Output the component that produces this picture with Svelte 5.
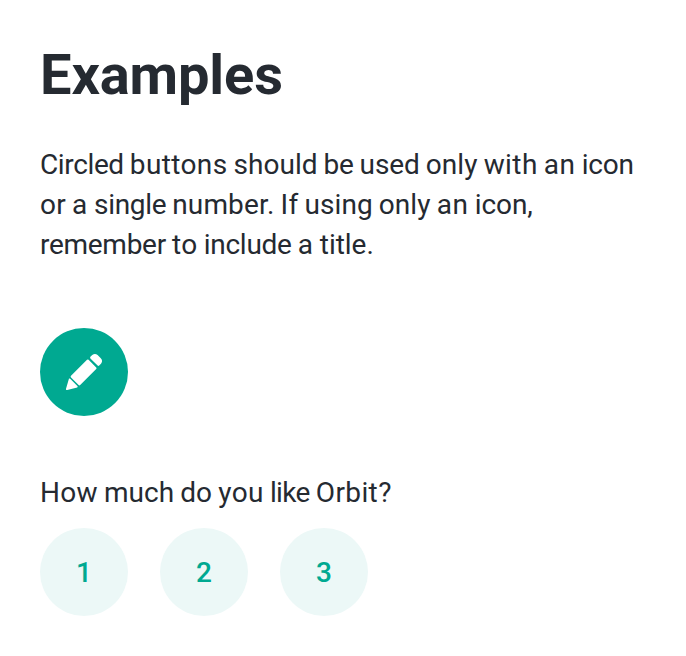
<script>
  const ratings = [1, 2, 3];

  // Each word carries its own tracking in pixels.
  const intro = [
    ['Circled', -0.37], ['buttons', 0.38], ['should', 0.02], ['be', -0.28], ['used', -0.13],
    ['only', 0.13], ['with', 0.4], ['an', 0.66], ['icon', -0.22], ['or', 0.28], ['a', 0.77],
    ['single', -0.34], ['number.', 0.17], ['If', 0.33], ['using', 0.03], ['only', 0.13],
    ['an', 0.66], ['icon,', -0.08], ['remember', -0.28], ['to', 0.44], ['include', -0.25],
    ['a', 0.77], ['title.', -0.02]
  ];
  const question = [
    ['How', 0.34], ['much', 0], ['do', 0.12], ['you', 0.45], ['like', -0.66], ['Orbit?', 0.4]
  ];
</script>

{#snippet tracked(words)}
  {#each words as [word, spacing]}<span style="letter-spacing: {spacing}px">{word}</span>{' '}{/each}
{/snippet}

<main>
  <h1>Examples</h1>
  <p class="intro">{@render tracked(intro)}</p>
  <button class="circle primary" title="Edit" aria-label="Edit">
    <svg viewBox="0 0 24 24" width="48" height="48" aria-hidden="true">
      <path fill="currentColor" d="M4.5 15.3 Q4.8 15.1 5.1 15.4 L8.7 19 Q9.1 19.5 8.6 19.7 L3.6 21 Q2.8 21.2 3 20.4 Z M5.5 14.7 Q5.1 14.3 5.5 13.9 L13.5 5.9 Q13.9 5.5 14.3 5.9 L18.1 9.7 Q18.5 10.1 18.1 10.5 L10.1 18.5 Q9.7 18.9 9.3 18.5 Z M15.2 5.2 Q14.9 4.8 15.2 4.4 L16.1 3.5 Q17.5 2.4 18.8 3.5 L20.4 5.1 Q21.6 6.4 20.5 7.9 L19.6 8.8 Q19.2 9.2 18.8 8.8 Z" />
    </svg>
  </button>
  <p class="question">{@render tracked(question)}</p>
  <div class="ratings">
    {#each ratings as rating}
      <button class="circle subtle">{rating}</button>
    {/each}
  </div>
</main>

<style>
  :global(body) {
    margin: 0;
    background: #fff;
  }
  main {
    box-sizing: border-box;
    width: 686px;
    height: 656px;
    padding: 40px;
    font-family: Roboto, sans-serif;
    color: #252a31;
  }
  h1 {
    margin: 0;
    font-size: 56px;
    line-height: 70px;
    font-weight: 700;
    letter-spacing: -0.12px;
  }
  p {
    margin: 0;
    font-size: 28px;
    line-height: 40px;
    word-spacing: -0.93px;
  }
  .intro {
    margin: 35px 0 63px;
  }
  .question {
    margin: 57px 0 15px;
  }
  .ratings {
    display: flex;
    gap: 32px;
  }
  .circle {
    display: flex;
    align-items: center;
    justify-content: center;
    width: 88px;
    height: 88px;
    padding: 0;
    border: 0;
    border-radius: 50%;
    font: 500 28px/40px Roboto, sans-serif;
  }
  .primary {
    background: #00a991;
    color: #fff;
  }
  .subtle {
    padding-top: 2px;
    background: #ecf8f7;
    color: #00a991;
  }
</style>
